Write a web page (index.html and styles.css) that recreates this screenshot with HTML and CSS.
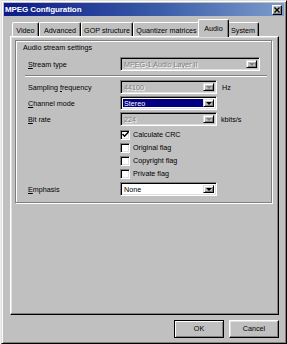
FILE: index.html
```html
<!DOCTYPE html>
<html>
<head>
  <meta charset="utf-8">
  <meta name="viewport" content="width=device-width, initial-scale=1.0">
  <title>MPEG Configuration</title>
  <link rel="stylesheet" href="styles.css">
</head>
<body>
<div class="dialog">
  <div class="titlebar">
    <span class="title">MPEG Configuration</span>
    <span class="close">
      <svg width="6" height="6" viewBox="0 0 6 6"><path d="M0.5 0.5 L5.5 5.5 M5.5 0.5 L0.5 5.5" stroke="#000" stroke-width="1.4"/></svg>
    </span>
  </div>

  <div class="tabs">
    <span class="tab tab-video">Video</span>
    <span class="tab tab-advanced">Advanced</span>
    <span class="tab tab-gop">GOP structure</span>
    <span class="tab tab-quant">Quantizer matrices</span>
    <span class="tab tab-audio active">Audio</span>
    <span class="tab tab-system">System</span>
  </div>

  <div class="panel">
    <div class="group">
      <div class="group-title">Audio stream settings</div>

      <div class="row">
        <span class="label"><u>S</u>tream type</span>
        <span class="combo combo-wide disabled"><span class="combo-text">MPEG-1 Audio Layer II</span><span class="drop"><i></i></span></span>
      </div>

      <div class="sep"></div>

      <div class="row">
        <span class="label">Sampling <u>f</u>requency</span>
        <span class="combo disabled"><span class="combo-text">44100</span><span class="drop"><i></i></span></span>
        <span class="unit">Hz</span>
      </div>
      <div class="row">
        <span class="label"><u>C</u>hannel mode</span>
        <span class="combo"><span class="combo-text selected">Stereo</span><span class="drop"><i></i></span></span>
      </div>
      <div class="row">
        <span class="label"><u>B</u>it rate</span>
        <span class="combo disabled"><span class="combo-text">224</span><span class="drop"><i></i></span></span>
        <span class="unit unit-kbit">kbits/s</span>
      </div>

      <div class="check-row">
        <span class="checkbox"><svg width="7" height="7" viewBox="0 0 7 7"><path d="M0.5 3 L2.5 5.2 L6.5 1" fill="none" stroke="#000" stroke-width="1.5"/></svg></span>
        <span>Calculate CRC</span>
      </div>
      <div class="check-row">
        <span class="checkbox"></span>
        <span>Original flag</span>
      </div>
      <div class="check-row">
        <span class="checkbox"></span>
        <span>Copyright flag</span>
      </div>
      <div class="check-row">
        <span class="checkbox"></span>
        <span>Private flag</span>
      </div>

      <div class="row row-emphasis">
        <span class="label"><u>E</u>mphasis</span>
        <span class="combo"><span class="combo-text">None</span><span class="drop"><i></i></span></span>
      </div>
    </div>
  </div>

  <div class="buttons">
    <span class="btn btn-default">OK</span>
    <span class="btn">Cancel</span>
  </div>
</div>
</body>
</html>
```

FILE: styles.css
```css
* { box-sizing: border-box; }
body { margin: 0; width: 287px; height: 344px; overflow: hidden; background: #eeeeee; font-family: "Liberation Sans", Arial, sans-serif; font-size: 7.2px; color: #000; }

.dialog { margin-left: 1px; width: 286px; height: 344px; padding: 2px; background: #c0c0c0; border: 1px solid; border-color: #dfdfdf #000 #000 #dfdfdf; box-shadow: inset 1px 1px #fff, inset -1px -1px #808080; display: flex; flex-direction: column; }

.titlebar { height: 13px; padding: 0 2px 0 1px; background: linear-gradient(90deg, #0b1a88 0%, #3a5ca8 55%, #7c9ccc 100%); display: flex; align-items: center; justify-content: space-between; }
.title { color: #fff; font-weight: bold; font-size: 8px; letter-spacing: -0.1px; }
.close { width: 10px; height: 10px; background: #c0c0c0; border: 1px solid; border-color: #fff #000 #000 #fff; box-shadow: inset -1px -1px #808080; display: flex; align-items: center; justify-content: center; }

.tabs { height: 17px; margin-top: 3px; padding-left: 8px; display: flex; align-items: flex-end; }
.tab { height: 14px; padding-top: 3px; text-align: center; background: #c0c0c0; border: 1px solid; border-bottom: none; border-color: #fff #000 #000 #fff; border-radius: 2px 2px 0 0; box-shadow: inset -1px 0 #808080; line-height: 9px; }
.tab-video { width: 27px; }
.tab-advanced { width: 42px; }
.tab-gop { width: 52px; }
.tab-quant { width: 67px; }
.tab-audio { width: 27px; }
.tab-system { width: 32px; }
.tab.active { position: relative; z-index: 1; height: 18px; width: 31px; margin: 0 -2px -1px; padding-top: 4px; }

.panel { width: 269px; height: 279px; margin-left: 6px; padding: 3px 0 0 4px; border: 1px solid; border-color: #fff #000 #000 #fff; box-shadow: inset -1px -1px #808080, inset 1px 1px #dfdfdf; }

.group { width: 257px; height: 163px; padding-left: 7px; border: 1px solid #808080; box-shadow: 1px 1px #fff, inset 1px 1px #fff; }
.group-title { height: 12px; margin-top: 1px; line-height: 12px; }

.row { height: 14px; margin-top: 2px; padding-left: 5px; display: flex; align-items: center; }
.group-title + .row { margin-top: 3px; }
.row-emphasis { margin-top: 2px; }
.label { width: 92px; }
.unit { margin-left: 5px; }
.unit-kbit { margin-left: 4px; }

.sep { width: 242px; height: 2px; margin: 4px 0 3px 2px; border-top: 1px solid #808080; border-bottom: 1px solid #fff; }
.sep + .row { margin-top: 0; }

.combo { width: 97px; height: 14px; padding: 2px; background: #fff; border: 1px solid; border-color: #808080 #fff #fff #808080; box-shadow: inset 1px 1px #000, inset -1px -1px #dfdfdf; display: flex; align-items: stretch; }
.combo-wide { width: 140px; }
.combo.disabled { background: #c0c0c0; color: #808080; text-shadow: 1px 1px 0 #fff; }
.combo-text { flex: 1; padding-left: 1px; line-height: 10px; white-space: nowrap; overflow: hidden; }
.combo-text.selected { background: #000080; color: #fff; }
.drop { width: 11px; background: #c0c0c0; border: 1px solid; border-color: #dfdfdf #000 #000 #dfdfdf; box-shadow: inset 1px 1px #fff, inset -1px -1px #808080; display: flex; align-items: center; justify-content: center; }
.drop i { width: 0; height: 0; border-left: 3px solid transparent; border-right: 3px solid transparent; border-top: 3px solid #000; }
.disabled .drop i { border-top-color: #808080; }

.check-row { height: 13px; padding-left: 97px; display: flex; align-items: center; }
.row + .check-row { margin-top: 2px; }
.checkbox { width: 10px; height: 10px; margin-right: 3px; background: #fff; border: 1px solid; border-color: #808080 #fff #fff #808080; box-shadow: inset 1px 1px #000, inset -1px -1px #dfdfdf; display: flex; align-items: center; justify-content: center; }

.buttons { height: 18px; margin-top: 5px; padding-right: 5px; display: flex; justify-content: flex-end; gap: 5px; }
.btn { width: 50px; height: 18px; line-height: 16px; text-align: center; border: 1px solid; border-color: #fff #000 #000 #fff; box-shadow: inset -1px -1px #808080, inset 1px 1px #dfdfdf; }
.btn-default { border-color: #000; box-shadow: inset 1px 1px #fff, inset -1px -1px #808080, inset -2px -2px #c0c0c0; }
```
